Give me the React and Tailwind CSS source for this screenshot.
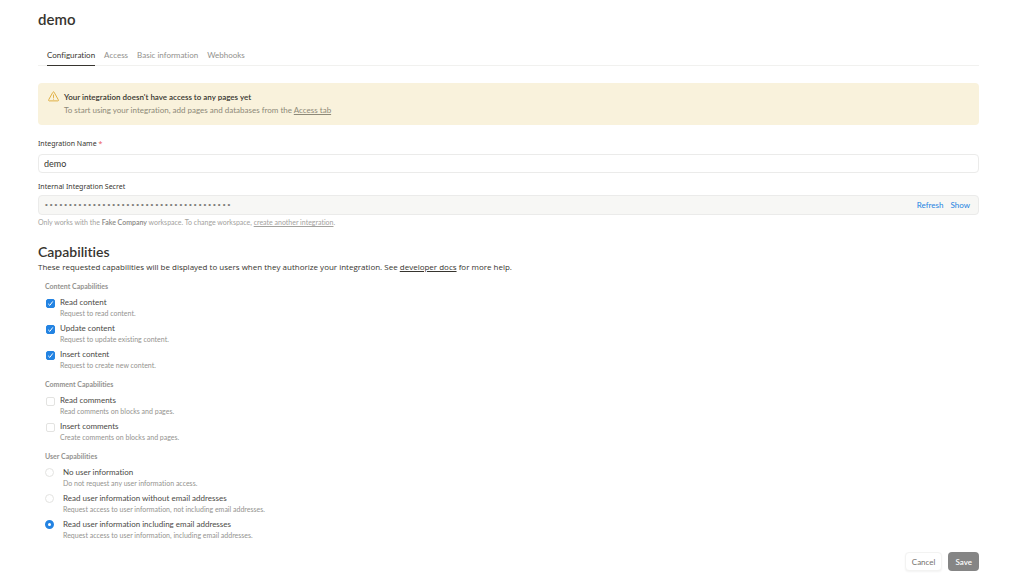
import { useState } from "react";

const TABS = ["Configuration", "Access", "Basic information", "Webhooks"];

const CONTENT = [
  { id: "read-content", label: "Read content", hint: "Request to read content." },
  { id: "update-content", label: "Update content", hint: "Request to update existing content." },
  { id: "insert-content", label: "Insert content", hint: "Request to create new content." },
];

const COMMENTS = [
  { id: "read-comments", label: "Read comments", hint: "Read comments on blocks and pages." },
  { id: "insert-comments", label: "Insert comments", hint: "Create comments on blocks and pages." },
];

const USERS = [
  { id: "user-none", label: "No user information", hint: "Do not request any user information access." },
  {
    id: "user-no-email",
    label: "Read user information without email addresses",
    hint: "Request access to user information, not including email addresses.",
  },
  {
    id: "user-email",
    label: "Read user information including email addresses",
    hint: "Request access to user information, including email addresses.",
  },
];

function WarningIcon() {
  return (
    <svg viewBox="0 0 20 20" className="h-[11px] w-[11px] shrink-0 text-[#dfab3a]" fill="none" stroke="currentColor" strokeWidth="1.7" strokeLinejoin="round" strokeLinecap="round">
      <path d="M8.9 2.2a1.3 1.3 0 0 1 2.2 0l7.7 13.9a1.3 1.3 0 0 1-1.1 1.9H2.3a1.3 1.3 0 0 1-1.1-1.9z" />
      <path d="M10 7.2v4.6M10 14.7v.2" />
    </svg>
  );
}

function ItemText({ label, hint }) {
  return (
    <span>
      <span className="block text-[8px] leading-[11px] text-[#4b4a46]">{label}</span>
      <span className="block text-[7px] leading-[10px] text-[#94938f]">{hint}</span>
    </span>
  );
}

function CheckItem({ id, label, hint, checked, onChange }) {
  return (
    <label htmlFor={id} className="flex items-start gap-[5px] pl-px">
      <span className="relative mt-[2px] h-[9px] w-[9px] shrink-0">
        <input
          id={id}
          type="checkbox"
          checked={checked}
          onChange={onChange}
          className="block h-[9px] w-[9px] appearance-none rounded-[2px] border border-[#e3e3e1] bg-white checked:border-[#2383e2] checked:bg-[#2383e2]"
        />
        {checked && (
          <svg viewBox="0 0 9 9" className="pointer-events-none absolute inset-0 h-[9px] w-[9px]" fill="none" stroke="#fff" strokeWidth="1">
            <path d="M2.2 4.8l1.6 1.6 3-4" />
          </svg>
        )}
      </span>
      <ItemText label={label} hint={hint} />
    </label>
  );
}

function RadioItem({ id, label, hint, checked, onChange }) {
  return (
    <label htmlFor={id} className="flex items-start gap-[9px]">
      <input
        id={id}
        type="radio"
        name="user-capability"
        checked={checked}
        onChange={onChange}
        className="mt-px block h-[9px] w-[9px] shrink-0 appearance-none rounded-full border border-[#e3e3e1] bg-white checked:border-[3px] checked:border-[#2383e2]"
      />
      <ItemText label={label} hint={hint} />
    </label>
  );
}

function Group({ title, children }) {
  return (
    <fieldset className="flex flex-col gap-[5px]">
      <legend className="mb-[6px] text-[7px] leading-[10px] font-bold text-[#94938f]">{title}</legend>
      {children}
    </fieldset>
  );
}

export default function App() {
  const [tab, setTab] = useState("Configuration");
  const [name, setName] = useState("demo");
  const [shown, setShown] = useState(false);
  const [enabled, setEnabled] = useState(["read-content", "update-content", "insert-content"]);
  const [user, setUser] = useState("user-email");

  const toggle = (id) =>
    setEnabled((prev) => (prev.includes(id) ? prev.filter((x) => x !== id) : [...prev, id]));

  const renderChecks = (items) =>
    items.map((item) => (
      <CheckItem key={item.id} {...item} checked={enabled.includes(item.id)} onChange={() => toggle(item.id)} />
    ));

  return (
    <main className="bg-white pt-[9px] pr-[45px] pb-[7px] pl-[38px] font-['Lato',sans-serif] text-[8px] leading-[12px] text-[#37352f] [font-variant-ligatures:none]">
      <h1 className="text-[15px] leading-[20px] font-semibold">demo</h1>

      <nav className="mt-[18px] flex gap-[9px] border-b border-[#f1f1ef] pl-[9px]">
        {TABS.map((t) => (
          <button
            key={t}
            type="button"
            onClick={() => setTab(t)}
            className={`-mb-px border-b pt-[2px] pb-1 ${
              t === tab ? "border-[#37352f] text-[#37352f]" : "border-transparent text-[#91908c]"
            }`}
          >
            {t}
          </button>
        ))}
      </nav>

      <section className="mt-[17px] flex gap-[5px] rounded bg-[#f9f2dc] px-[10px] py-[8px]">
        <WarningIcon />
        <div>
          <p className="leading-[13px] font-semibold">Your integration doesn't have access to any pages yet</p>
          <p className="leading-[13px] text-[#8d8978]">
            To start using your integration, add pages and databases from the{" "}
            <a href="#access" className="underline">Access tab</a>
          </p>
        </div>
      </section>

      <label htmlFor="name" className="mt-[13px] block font-['Noto_Sans',sans-serif] text-[7px]">
        Integration Name <span className="text-[#eb5757]">*</span>
      </label>
      <input
        id="name"
        value={name}
        onChange={(e) => setName(e.target.value)}
        className="mt-1 block h-[19px] w-full rounded border border-[#ebebea] bg-white px-[5px] text-[9px]"
      />

      <label htmlFor="secret" className="mt-2 block font-['Noto_Sans',sans-serif] text-[7px]">
        Internal Integration Secret
      </label>
      <div className="mt-[2px] flex h-5 items-center gap-[7px] rounded border border-[#ebebea] bg-[#f7f7f5] pr-2 pl-[5px] text-[#2383e2]">
        <input
          id="secret"
          type={shown ? "text" : "password"}
          readOnly
          value="000000000000000000000000000000000000000"
          className="min-w-0 flex-1 bg-transparent font-['Liberation_Mono',monospace] text-[8px] text-[#7d7c78]"
        />
        <button type="button">Refresh</button>
        <button type="button" onClick={() => setShown(!shown)}>Show</button>
      </div>
      <p className="mt-px text-[7px] text-[#a3a29e]">
        Only works with the <b className="font-semibold text-[#8a8985]">Fake Company</b> workspace. To change workspace,{" "}
        <a href="#new" className="underline">create another integration</a>.
      </p>

      <h2 className="mt-4 text-[14px] leading-[16px] font-semibold">Capabilities</h2>
      <p className="mt-px font-['Open_Sans',sans-serif]">
        These requested capabilities will be displayed to users when they authorize your integration. See{" "}
        <a href="#docs" className="underline">developer docs</a> for more help.
      </p>

      <form className="mt-2 flex flex-col gap-[9px] pl-[7px]">
        <Group title="Content Capabilities">{renderChecks(CONTENT)}</Group>
        <Group title="Comment Capabilities">{renderChecks(COMMENTS)}</Group>
        <Group title="User Capabilities">
          {USERS.map((item) => (
            <RadioItem key={item.id} {...item} checked={user === item.id} onChange={() => setUser(item.id)} />
          ))}
        </Group>
      </form>

      <footer className="mt-3 flex justify-end gap-[6px]">
        <button type="button" className="h-[19px] rounded border border-[#f3f3f2] bg-white px-[6px] text-[#73726e] shadow-xs">
          Cancel
        </button>
        <button type="button" className="h-[19px] rounded bg-[#858585] px-[7px] font-semibold text-white">
          Save
        </button>
      </footer>
    </main>
  );
}
